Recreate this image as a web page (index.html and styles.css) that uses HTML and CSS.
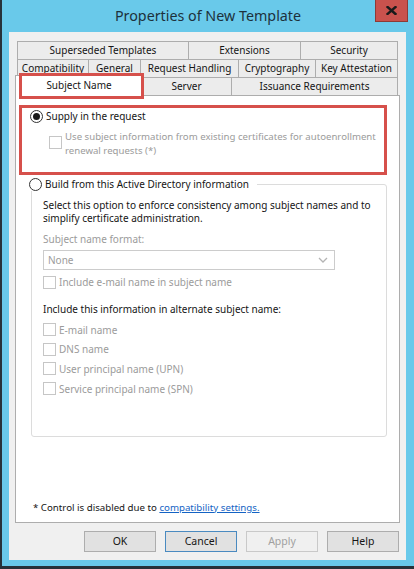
FILE: index.html
```html
<!DOCTYPE html>
<html>
<head>
<meta charset="utf-8">
<link rel="stylesheet" href="styles.css">
</head>
<body>
<div class="window">
  <div class="titlebar">
    <div class="title">Properties of New Template</div>
    <div class="close">
      <svg width="11" height="9" viewBox="0 0 11 9"><path d="M1.5 1 L9.5 8 M9.5 1 L1.5 8" stroke="#1a1a1a" stroke-width="2.4" stroke-linecap="square"/></svg>
    </div>
  </div>
  <div class="client">
    <div class="tabs">
      <div class="tabrow">
        <div class="tab w-superseded">Superseded Templates</div>
        <div class="tab w-extensions">Extensions</div>
        <div class="tab last">Security</div>
      </div>
      <div class="tabrow">
        <div class="tab w-compat">Compatibility</div>
        <div class="tab w-general">General</div>
        <div class="tab w-request">Request Handling</div>
        <div class="tab w-crypto">Cryptography</div>
        <div class="tab last">Key Attestation</div>
      </div>
      <div class="tabrow bottomrow">
        <div class="tab selected">Subject Name<span class="hl-tab"></span></div>
        <div class="tab w-server">Server</div>
        <div class="tab last">Issuance Requirements</div>
      </div>
    </div>
    <div class="panel">
      <div class="highlight">
        <div class="optrow">
          <span class="radio checked"></span>
          <span class="lbl">Supply in the request</span>
        </div>
        <div class="subopt">
          <span class="chk"></span>
          <span class="lbl dis two">Use subject information from existing certificates for autoenrollment<br>renewal requests (*)</span>
        </div>
      </div>
      <div class="group">
        <div class="legend">
          <span class="radio"></span>
          <span class="lbl">Build from this Active Directory information</span>
        </div>
        <div class="desc">Select this option to enforce consistency among subject names and to<br>simplify certificate administration.</div>
        <div class="fmtlabel dis">Subject name format:</div>
        <div class="select">
          <span class="dis">None</span>
          <svg class="chev" width="10" height="6" viewBox="0 0 10 6"><path d="M1 1 L5 5 L9 1" fill="none" stroke="#b4b4b4" stroke-width="1.3"/></svg>
        </div>
        <div class="chkrow email">
          <span class="chk"></span><span class="lbl dis">Include e-mail name in subject name</span>
        </div>
        <div class="altlabel">Include this information in alternate subject name:</div>
        <div class="chklist">
          <div class="chkrow"><span class="chk"></span><span class="lbl dis">E-mail name</span></div>
          <div class="chkrow"><span class="chk"></span><span class="lbl dis">DNS name</span></div>
          <div class="chkrow"><span class="chk"></span><span class="lbl dis">User principal name (UPN)</span></div>
          <div class="chkrow"><span class="chk"></span><span class="lbl dis">Service principal name (SPN)</span></div>
        </div>
      </div>
      <div class="footer">* Control is disabled due to <span class="link">compatibility settings.</span></div>
    </div>
    <div class="buttons">
      <div class="btn">OK</div>
      <div class="btn focus">Cancel</div>
      <div class="btn disabled">Apply</div>
      <div class="btn">Help</div>
    </div>
  </div>
</div>
</body>
</html>
```
FILE: styles.css
```css
* { box-sizing: border-box; }
html, body { margin: 0; padding: 0; }
body {
  background: #27323a;
  width: 414px;
  height: 569px;
  overflow: hidden;
  font-family: "Noto Sans", "Liberation Sans", sans-serif;
  font-size: 10px;
  color: #151515;
}
.window {
  margin-left: 2px;
  width: 412px;
  height: 566px;
  background: #69c9ea;
  display: flex;
  flex-direction: column;
}
.titlebar {
  height: 32px;
  display: flex;
  align-items: center;
  justify-content: center;
  position: relative;
  padding-bottom: 1px;
}
.title {
  font-size: 14.3px;
  color: #1d313c;
}
.close {
  position: absolute;
  top: 0;
  right: 6px;
  width: 33px;
  height: 22px;
  background: #c9524d;
  border: 1px solid #8e3a36;
  border-top: none;
  display: flex;
  align-items: center;
  justify-content: center;
}
.client {
  flex: 1;
  margin: 0 8px 6px 7px;
  background: #f0f0f0;
  padding: 9px 6px 8px 6px;
  display: flex;
  flex-direction: column;
}
.tabs {
  padding: 0 2px;
}
.tabrow {
  display: flex;
  height: 18px;
  align-items: flex-end;
}
.tab {
  height: 18px;
  border: 1px solid #adadad;
  border-bottom: none;
  border-right: none;
  background: #ececec;
  display: flex;
  align-items: center;
  justify-content: center;
  white-space: nowrap;
  padding-bottom: 1px;
}
.tab.last {
  flex: 1;
  border-right: 1px solid #adadad;
}
.w-superseded { width: 171px; }
.w-extensions { width: 112px; }
.w-compat { width: 71px; }
.w-general { width: 52px; }
.w-request { width: 98px; }
.w-crypto { width: 77px; }
.w-server { width: 90px; }
.tab.selected {
  position: relative;
  z-index: 2;
  width: 128px;
  height: 21px;
  margin: 0 -2px -1px -2px;
  background: #fff;
  border-right: 1px solid #adadad;
  padding-bottom: 2px;
}
.hl-tab {
  position: absolute;
  left: 3px;
  top: -3px;
  width: 125px;
  height: 26px;
  border: 3px solid #d6504b;
}
.panel {
  flex: 1;
  background: #fff;
  border: 1px solid #adadad;
  display: flex;
  flex-direction: column;
}
.highlight {
  margin: 9px 12px 0 3px;
  height: 70px;
  border: 3px solid #d6504b;
  padding: 1px 0 0 8px;
}
.optrow {
  display: flex;
  align-items: center;
  height: 14px;
}
.radio {
  width: 13px;
  height: 13px;
  border: 1px solid #333;
  border-radius: 50%;
  background: #fff;
  display: flex;
  align-items: center;
  justify-content: center;
  flex: none;
}
.radio.checked::after {
  content: "";
  width: 7px;
  height: 7px;
  border-radius: 50%;
  background: #1a1a1a;
}
.lbl {
  margin-left: 3px;
  white-space: nowrap;
}
.dis { color: #9b9b9b; }
.subopt {
  display: flex;
  align-items: flex-start;
  margin: 7px 0 0 19px;
}
.subopt .chk { margin-top: 6px; }
.subopt .lbl { line-height: 14px; font-size: 9.65px; }
.chk {
  width: 13px;
  height: 13px;
  border: 1px solid #c6c6c6;
  background: #fff;
  flex: none;
}
.group {
  margin: 9px 12px 0 15px;
  height: 253px;
  border: 1px solid #dcdcdc;
  border-radius: 3px;
  padding-left: 11px;
}
.legend {
  display: flex;
  align-items: center;
  height: 14px;
  width: fit-content;
  margin: -8px 0 0 -14px;
  padding-right: 8px;
  background: #fff;
}
.desc {
  margin-top: 8px;
  line-height: 13px;
  white-space: nowrap;
}
.fmtlabel {
  margin-top: 8px;
  line-height: 13px;
}
.select {
  margin-top: 4px;
  width: 292px;
  height: 20px;
  border: 1px solid #cccccc;
  background: #fff;
  display: flex;
  align-items: center;
  justify-content: space-between;
  padding: 0 4px 0 4px;
}
.chev { margin-right: 2px; }
.chkrow {
  display: flex;
  align-items: center;
  height: 20px;
}
.chkrow.email { margin-top: 2px; }
.altlabel {
  margin-top: 11px;
  line-height: 13px;
}
.chklist { margin-top: 4px; }
.chklist .chkrow { height: 19.6px; }
.footer {
  margin-top: auto;
  padding: 0 0 7px 17px;
  line-height: 14px;
  font-size: 9.7px;
}
.link {
  color: #1463c4;
  text-decoration: underline;
}
.buttons {
  margin-top: 8px;
  display: flex;
  justify-content: flex-end;
  gap: 9px;
  padding-right: 1px;
}
.btn {
  width: 72px;
  height: 21px;
  border: 1px solid #adadad;
  background: #e1e1e1;
  display: flex;
  align-items: center;
  justify-content: center;
  padding-bottom: 1px;
  font-size: 10.5px;
}
.btn.focus { border-color: #4a8ac0; }
.btn.disabled {
  background: #f0f0f0;
  border-color: #c9c9c9;
  color: #a0a0a0;
}
```
